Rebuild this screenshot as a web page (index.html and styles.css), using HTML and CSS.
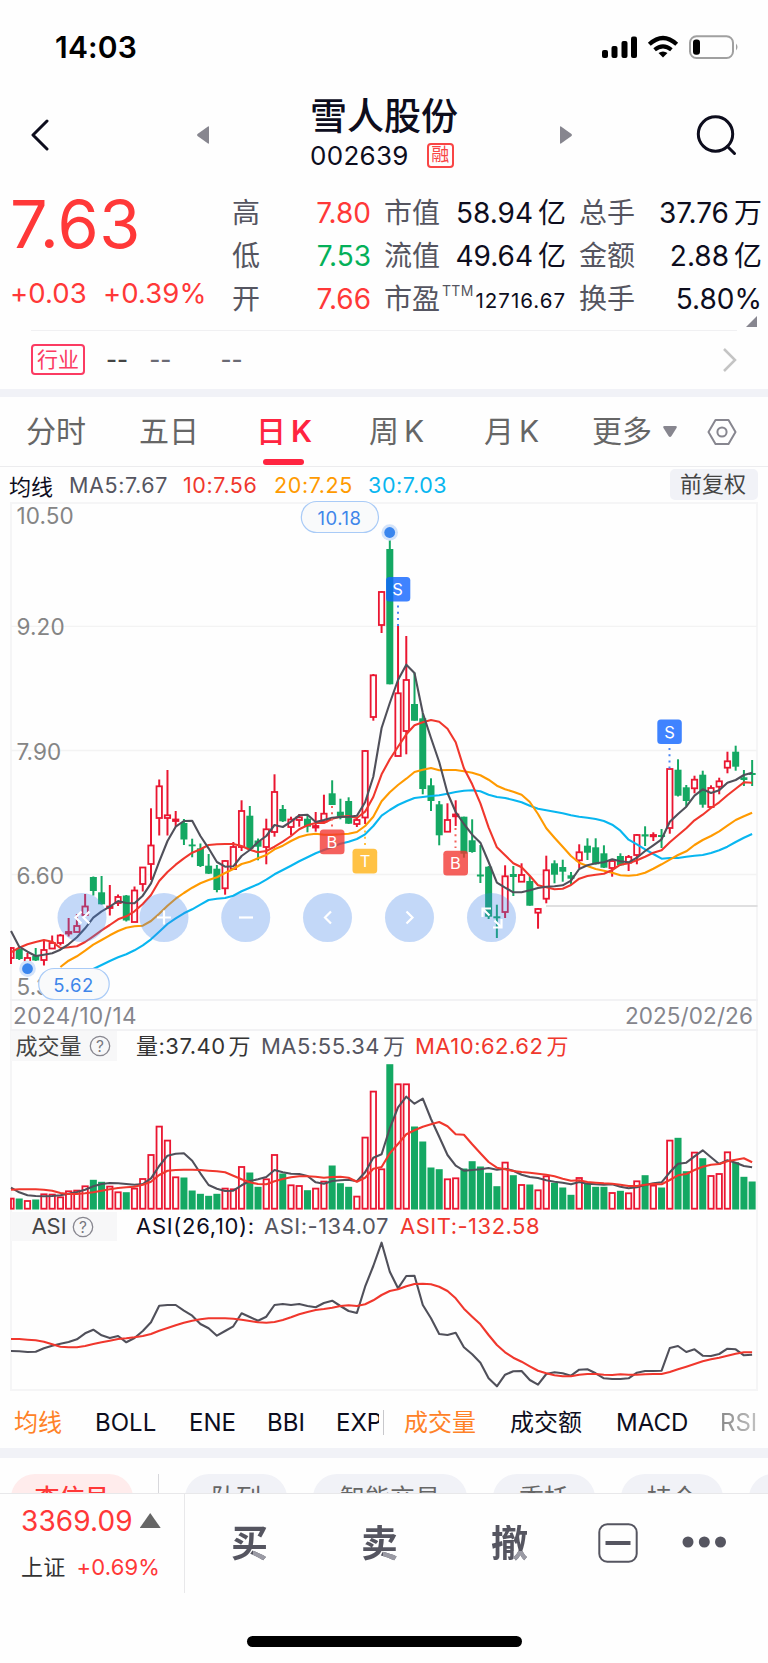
FILE: index.html
```html
<!DOCTYPE html>
<html lang="zh-CN">
<head>
    <meta charset="UTF-8">
    <meta name="viewport" content="width=device-width, initial-scale=1.0">
    <title>雪人股份 002639</title>
    <link rel="stylesheet" href="styles.css">
</head>
<body>
    <div class="status-bar">
        <span class="time">14:03</span>
        <svg class="status-icons" width="138" height="26" viewBox="0 0 138 26">
            <rect x="0" y="15" width="6" height="8" rx="2"/>
            <rect x="9.5" y="11" width="6" height="12" rx="2"/>
            <rect x="19.5" y="6" width="6" height="17" rx="2"/>
            <rect x="29" y="1.500" width="6" height="21.500" rx="2"/>
            <path d="M61 22.500 L56.500 18 Q61 14.800 65.500 18 Z"/>
            <path d="M52.600 14.800 Q61 8 69.400 14.800" fill="none" stroke="#000" stroke-width="4"/>
            <path d="M47.300 9.300 Q61 -3.300 74.700 9.300" fill="none" stroke="#000" stroke-width="4.200"/>
            <rect x="88" y="1.200" width="43" height="21.800" rx="6.500" fill="none" stroke="#a0a0a0" stroke-width="2"/>
            <rect x="91" y="4.500" width="7" height="15.200" rx="3"/>
            <path d="M134 8.500 q3 3.500 0 7 z" fill="#a0a0a0"/>
        </svg>
    </div>

    <header class="header">
        <svg class="back" width="20" height="32" viewBox="0 0 20 32"><path d="M17 2 L3 16 L17 30"/></svg>
        <svg class="prev" width="14" height="20" viewBox="0 0 14 20"><path d="M13 2 V18 Q13 19 12 18.500 L1.500 11 Q.5 10 1.500 9 L12 1.500 Q13 1 13 2Z"/></svg>
        <div class="stock">
            <div class="stock-name">雪人股份</div>
            <div class="stock-code">002639<span class="rong">融</span></div>
        </div>
        <svg class="next" width="14" height="20" viewBox="0 0 14 20"><path d="M1 2 V18 Q1 19 2 18.500 L12.500 11 Q13.500 10 12.500 9 L2 1.500 Q1 1 1 2Z"/></svg>
        <svg class="search" width="42" height="42" viewBox="0 0 42 42"><circle cx="19.500" cy="19" r="17.200"/><path d="M31.500 31.500 L38.500 38.500"/></svg>
    </header>

    <section class="quote">
        <div class="price-box">
            <div class="price">7.63</div>
            <div class="change"><span>+0.03</span><span>+0.39%</span></div>
        </div>
        <div class="stats">
            <span class="name">高</span><span class="val up">7.80</span>
            <span class="name">市值</span><span class="val">58.94<i>亿</i></span>
            <span class="name">总手</span><span class="val">37.76<i>万</i></span>
            <span class="name">低</span><span class="val down">7.53</span>
            <span class="name">流值</span><span class="val">49.64<i>亿</i></span>
            <span class="name">金额</span><span class="val">2.88<i>亿</i></span>
            <span class="name">开</span><span class="val up">7.66</span>
            <span class="name">市盈<sup>TTM</sup></span><span class="val small">12716.67</span>
            <span class="name">换手</span><span class="val">5.80%</span>
        </div>
        <div class="corner"></div>
    </section>

    <div class="industry">
        <span class="tag">行业</span>
        <span class="dash d1">--</span><span class="dash d2">--</span><span class="dash d3">--</span>
        <svg width="16" height="28" viewBox="0 0 16 28"><path d="M2 3 L13 14 L2 25"/></svg>
    </div>

    <nav class="tabs">
        <span>分时</span>
        <span>五日</span>
        <span class="active">日<b>K</b></span>
        <span>周<b>K</b></span>
        <span>月<b>K</b></span>
        <span>更多</span>
        <svg class="caret" width="16" height="13" viewBox="0 0 16 13"><path d="M2.500 1 H13.500 Q15.500 1 14.500 3 L9.500 11 Q8 13 6.500 11 L1.500 3 Q.5 1 2.500 1Z"/></svg>
        <svg class="hexagon" width="30" height="28" viewBox="0 0 30 28"><path d="M8.500 2 H21.500 L28.500 14 L21.500 26 H8.500 L1.500 14Z"/><circle cx="15" cy="14" r="4.600"/></svg>
    </nav>

    <div class="legend">
        <span class="lead">均线</span>
        <span class="ma5">MA5:7.67</span>
        <span class="ma10">10:7.56</span>
        <span class="ma20">20:7.25</span>
        <span class="ma30">30:7.03</span>
        <span class="adjust">前复权</span>
    </div>

    <main class="charts">
        <div class="panel kline-panel">
            <svg id="kline" width="768" height="498" viewBox="0 502 768 498">
                <g class="grid">
                    <path d="M11 626.300 H757 M11 750.500 H757 M11 874.500 H757"/>
                    <path class="support" d="M546 906 H757.500"/>
                </g>
                <g class="axis">
                    <text x="16.500" y="524">10.50</text>
                    <text x="16.500" y="634.500">9.20</text>
                    <text x="16.500" y="759.500">7.90</text>
                    <text x="16.500" y="883.500">6.60</text>
                    <text x="16.500" y="994.500">5.30</text>
                </g>
                <g id="candles"></g>
                <g id="averages"></g>
                <g class="pins">
                    <path class="s" d="M398 605.500 V627 M669.500 748 V769"/>
                    <path class="b" d="M332 806 V827 M455.500 828 V848"/>
                    <path class="t" d="M365 830.500 V847"/>
                    <rect class="s" x="386" y="577" width="24.300" height="24.500" rx="3.500"/>
                    <rect class="s" x="657.300" y="719.500" width="24.500" height="24.500" rx="3.500"/>
                    <rect class="b" x="319.800" y="829.500" width="24.700" height="24.700" rx="3.500"/>
                    <rect class="b" x="443.300" y="850.700" width="24.700" height="24.700" rx="3.500"/>
                    <rect class="t" x="352.500" y="848.700" width="24.700" height="24.700" rx="3.500"/>
                    <text x="397.500" y="595">S</text>
                    <text x="669.500" y="738">S</text>
                    <text x="332" y="848">B</text>
                    <text x="455.500" y="869">B</text>
                    <text x="365" y="867">T</text>
                </g>
                <g class="extremes">
                    <circle class="halo" cx="389.700" cy="532.500" r="8.300"/><circle cx="389.700" cy="532.500" r="5.400"/>
                    <circle class="halo" cx="27.500" cy="968.700" r="8.300"/><circle cx="27.500" cy="968.700" r="5.400"/>
                    <rect x="301.300" y="501.500" width="77.200" height="31" rx="15.500"/>
                    <rect x="38.700" y="968.500" width="70.500" height="31" rx="15.500"/>
                    <text x="339.500" y="524.500">10.18</text>
                    <text x="73.500" y="991.800">5.62</text>
                </g>
                <g class="controls">
                    <circle cx="82" cy="917.500" r="24.500"/>
                    <circle cx="164" cy="917.500" r="24.500"/>
                    <circle cx="245.700" cy="917.500" r="24.500"/>
                    <circle cx="327.500" cy="917.500" r="24.500"/>
                    <circle cx="409.500" cy="917.500" r="24.500"/>
                    <circle cx="491.500" cy="917.500" r="24.500"/>
                    <path d="M81.500 911.500 L75.500 917.500 L81.500 923.500 M89.500 911.500 L83.500 917.500 L89.500 923.500"/>
                    <path d="M157 917.500 H171 M164 910.500 V924.500"/>
                    <path d="M239 917.500 H253"/>
                    <path d="M331 911.500 L325 917.500 L331 923.500"/>
                    <path d="M406.500 911.500 L412.500 917.500 L406.500 923.500"/>
                    <path d="M482.500 917 V908.500 H491 M482.500 908.500 L489.500 915.500 M501.500 919 V927.500 H493 M501.500 927.500 L494.500 920.500"/>
                </g>
            </svg>
        </div>
        <div class="dates"><span class="from">2024/10/14</span><span>2025/02/26</span></div>

        <div class="panel">
            <div class="panel-head vol-head">
                <span class="picker">成交量<svg width="22" height="22" viewBox="0 0 22 22"><circle cx="11" cy="11" r="9.700"/><text x="11" y="16.500">?</text></svg></span>
                <span class="c-dark">量:37.40<i>万</i></span>
                <span class="ma5">MA5:55.34<i>万</i></span>
                <span class="ma10">MA10:62.62<i>万</i></span>
            </div>
            <svg id="volume" width="768" height="151" viewBox="0 1061 768 151"></svg>
        </div>

        <div class="panel">
            <div class="panel-head asi-head">
                <span class="picker">ASI<svg width="22" height="22" viewBox="0 0 22 22"><circle cx="11" cy="11" r="9.700"/><text x="11" y="16.500">?</text></svg></span>
                <span class="c-black">ASI(26,10):</span>
                <span class="ma5">ASI:-134.07</span>
                <span class="ma10">ASIT:-132.58</span>
            </div>
            <svg id="asi" width="768" height="150" viewBox="0 1241 768 150"></svg>
        </div>
    </main>

    <div class="indicators">
        <div class="ind-main">
            <span class="on">均线</span><span>BOLL</span><span>ENE</span><span>BBI</span><span>EXPMA</span>
        </div>
        <div class="ind-sub">
            <span class="on">成交量</span><span>成交额</span><span>MACD</span><span class="fade">RSI</span>
        </div>
    </div>

    <div class="pills">
        <span class="pill hot">查信号</span>
        <span class="line"></span>
        <span class="pill">队列</span>
        <span class="pill wide">智能交易</span>
        <span class="pill">委托</span>
        <span class="pill">持仓</span>
        <span class="pill"></span>
    </div>

    <footer class="bottom-bar">
        <div class="index-box">
            <div class="index-value">3369.09<span class="tri"></span></div>
            <div class="index-change"><span>上证</span><em>+0.69%</em></div>
        </div>
        <span class="trade buy">买</span>
        <span class="trade sell">卖</span>
        <span class="trade cancel">撤</span>
        <svg class="minus" width="41" height="41" viewBox="0 0 41 41"><rect x="1.300" y="1.300" width="37.400" height="37.400" rx="8"/><path d="M7.500 20 H32.500"/></svg>
        <svg class="more" width="46" height="14" viewBox="0 0 46 14"><circle cx="7" cy="7" r="5.500"/><circle cx="23.300" cy="7" r="5.500"/><circle cx="39.500" cy="7" r="5.500"/></svg>
    </footer>
    <div class="home-indicator"></div>

    <script src="chart.js"></script>
</body>
</html>
```
FILE: styles.css
```css
*, *::after {
    box-sizing: border-box;
}
body {
    margin: 0;
    width: 768px;
    height: 1663px;
    overflow: hidden;
    background: #fefefe;
    color: #0d0d1d;
    font-family: Inter, "Noto Sans CJK SC", sans-serif;
}
svg {
    display: block;
    flex: none;
}
i, em {
    font-style: normal;
}

/* status bar */
.status-bar {
    display: flex;
    justify-content: space-between;
    height: 90px;
    padding: 35px 28px 0 55px;
}
.time {
    font-size: 30px;
    line-height: 24px;
    font-weight: 600;
    color: #000;
    letter-spacing: 0.2px;
}

/* header */
.header {
    display: flex;
    height: 100px;
    padding-left: 30px;
}
.header svg {
    fill: none;
    stroke: #0d0d1d;
    stroke-width: 3;
    stroke-linecap: round;
    stroke-linejoin: round;
}
.header .prev, .header .next {
    fill: #87868f;
    stroke: none;
    margin-top: 35px;
}
.back {
    margin-top: 29px;
}
.prev {
    margin-left: 146px;
}
.stock {
    width: 160px;
    margin-left: 100px;
}
.stock-name {
    margin-top: 6px;
    font-size: 37px;
    line-height: 42px;
    font-weight: 500;
    white-space: nowrap;
}
.stock-code {
    display: flex;
    margin-top: 5px;
    font-size: 26px;
    line-height: 26px;
    letter-spacing: 0.3px;
}
.rong {
    width: 27px;
    height: 25px;
    margin: 0 0 0 18px;
    border: 2px solid #f94545;
    border-radius: 4px;
    color: #f94545;
    font-size: 18px;
    line-height: 20px;
    letter-spacing: 0;
    text-align: center;
}
.next {
    margin-left: 89px;
}
.search {
    margin: 25px 0 0 123px;
}

/* quote */
.quote {
    position: relative;
    display: flex;
    height: 141px;
    margin: 0 31px 0 0;
}
.quote::after {
    content: "";
    position: absolute;
    left: 31px;
    right: 0;
    bottom: 0;
    height: 1px;
    background: #f0f0f2;
}
.price-box {
    width: 232px;
    flex: none;
    padding-left: 10px;
    color: #ff3838;
}
.price {
    font-size: 66.5px;
    line-height: 68px;
    letter-spacing: 0.4px;
}
.change {
    display: flex;
    gap: 16px;
    margin-top: 19px;
    font-size: 27.5px;
    line-height: 32px;
    letter-spacing: 0.1px;
}
.stats {
    display: grid;
    flex: none;
    grid-template-columns: 40px 99px 70px 125px 81px 115px;
    grid-template-rows: 43px 43px 43px;
    padding-top: 1px;
    font-size: 28px;
    line-height: 44px;
    white-space: nowrap;
}
.stats .name {
    color: #555560;
}
.stats .name:nth-child(6n+3) {
    padding-left: 13px;
}
.stats .name:nth-child(6n+5) {
    padding-left: 13px;
}
.stats .val {
    text-align: right;
}
.stats .val i {
    margin-left: 5px;
}
.stats .up {
    color: #ff3838;
}
.stats .down {
    color: #04b059;
}
.stats .small {
    font-size: 20.5px;
    letter-spacing: 1px;
    padding-top: 2px;
}
.stats sup {
    display: inline-block;
    margin-left: 2px;
    font-size: 14px;
    line-height: 14px;
    letter-spacing: 0.3px;
    vertical-align: 13px;
}
.corner {
    position: absolute;
    left: 746px;
    top: 126px;
    width: 11px;
    height: 11px;
    background: #87868f;
    clip-path: polygon(100% 0, 100% 100%, 0 100%);
}

/* industry */
.industry {
    display: flex;
    align-items: center;
    height: 58px;
    padding: 0 30px 1px 31px;
    font-size: 24px;
}
.tag {
    width: 54px;
    height: 31px;
    border: 2px solid #fb3b62;
    border-radius: 4px;
    color: #fb3b62;
    font-size: 21px;
    line-height: 27px;
    text-align: center;
}
.dash {
    color: #6a6a74;
    font-weight: 500;
}
.d1 {
    color: #444;
    margin-left: 21px;
}
.d2 {
    margin-left: 21px;
}
.d3 {
    margin-left: 49px;
}
.industry svg {
    margin-left: auto;
    fill: none;
    stroke: #c4c4c4;
    stroke-width: 2.5;
}

/* period tabs */
.tabs {
    display: grid;
    grid-template-columns: 113px 117px 113px 115px 108px 70px 45px auto;
    align-items: center;
    height: 78px;
    padding: 0 0 0 26px;
    border-top: 8px solid #f1f2f7;
    border-bottom: 1px solid #ececee;
    font-size: 30px;
    line-height: 44px;
    color: #666;
}
.tabs span {
    position: relative;
    margin-top: -2px;
}
.tabs b {
    font-weight: 400;
    margin-left: 5px;
}
.tabs .active {
    color: #ff2440;
    font-weight: 500;
}
.tabs .active b {
    font-weight: 600;
}
.tabs .active::after {
    content: "";
    position: absolute;
    left: 7px;
    bottom: -12px;
    width: 41px;
    height: 6px;
    border-radius: 3px;
    background: #ff2440;
}
.caret {
    fill: #87868f;
}
.hexagon {
    fill: none;
    stroke: #87868f;
    stroke-width: 2;
    stroke-linejoin: round;
}

/* MA legend */
.legend {
    display: grid;
    grid-template-columns: 60px 114px 91px 94px 302px 88px;
    align-items: center;
    height: 35px;
    padding-left: 9px;
    font-size: 21.5px;
    letter-spacing: 0.6px;
}
.lead {
    font-size: 22px;
    letter-spacing: 0;
}
.ma5 {
    color: #555560;
}
.ma10 {
    color: #f0372d;
}
.ma20 {
    color: #ff9a00;
}
.ma30 {
    color: #08b6f0;
}
.adjust {
    height: 31px;
    padding-right: 2px;
    border-radius: 5px;
    background: #f1f2f7;
    color: #444;
    font-size: 22px;
    line-height: 30px;
    letter-spacing: 0;
    text-align: center;
}

/* charts */
.charts {
    position: relative;
    height: 889px;
}
.charts::after {
    content: "";
    position: absolute;
    left: 10px;
    top: 0;
    width: 748px;
    height: 889px;
    border: 2px solid #f5f5f6;
    z-index: -1;
}
.charts svg {
    overflow: visible;
}
.kline-panel {
    height: 497px;
}
.grid path {
    stroke: #f3f3f3;
    stroke-width: 1.3;
}
.grid .support {
    stroke: #dfdfe0;
    stroke-width: 2;
}
.axis text {
    font-size: 22.5px;
    letter-spacing: 0.1px;
    fill: #858585;
}
.bar-up {
    fill: #fefefe;
    stroke: #ea1631;
    stroke-width: 1.8;
}
.wick-up {
    stroke: #ea1631;
    stroke-width: 2;
}
.bar-down {
    fill: #14a863;
}
.wick-down {
    stroke: #14a863;
    stroke-width: 2;
}
.line {
    fill: none;
    stroke-width: 2.1;
    stroke-linejoin: round;
}
.line.ma5 {
    stroke: #50505a;
}
.line.ma10 {
    stroke: #f0372d;
}
.line.ma20 {
    stroke: #ff9a00;
}
.line.ma30 {
    stroke: #08b6f0;
}
.pins path {
    stroke-width: 2;
    stroke-dasharray: 2 4.2;
}
.pins path.s {
    stroke: #4a86f5;
}
.pins path.b {
    stroke: #f4605a;
}
.pins path.t {
    stroke: #ffc044;
}
.pins rect.s {
    fill: #0f64ff;
    fill-opacity: 0.8;
}
.pins rect.b {
    fill: #f23530;
    fill-opacity: 0.78;
}
.pins rect.t {
    fill: #ffb621;
    fill-opacity: 0.84;
}
.pins text {
    fill: #fff;
    font-size: 16.5px;
    text-anchor: middle;
}
.extremes circle {
    fill: #3a86ee;
}
.extremes .halo {
    fill: #d3e3fa;
}
.extremes rect {
    fill: #f9fafb;
    stroke: #a9cbf7;
    stroke-width: 1.2;
}
.extremes text {
    fill: #3f86ea;
    font-size: 18.5px;
    letter-spacing: 0.5px;
    text-anchor: middle;
}
.controls circle {
    fill: #3b82eb;
    fill-opacity: 0.3;
}
.controls path {
    fill: none;
    stroke: #fff;
    stroke-width: 2.2;
}
.dates {
    display: flex;
    justify-content: space-between;
    height: 32px;
    margin: 0 10px;
    padding: 0 5px 0 3px;
    border-top: 2px solid #f2f2f4;
    border-bottom: 2px solid #f2f2f4;
    font-size: 22.5px;
    line-height: 29px;
    letter-spacing: 0.1px;
    color: #85858c;
}
.dates .from {
    letter-spacing: 0.5px;
}
.panel-head {
    display: grid;
    grid-template-columns: 125px 125px 154px auto;
    height: 30px;
    padding-left: 11px;
    font-size: 22px;
    line-height: 30px;
    letter-spacing: 0.5px;
    white-space: nowrap;
}
.asi-head {
    grid-template-columns: 125px 128px 136px auto;
    height: 29px;
    line-height: 29px;
}
.asi-head .c-black {
    letter-spacing: 0.7px;
}
.panel-head i {
    margin-left: 3px;
    letter-spacing: 0;
}
.picker {
    display: flex;
    align-items: center;
    justify-content: center;
    gap: 5px;
    width: 106px;
    margin-right: 19px;
    padding-right: 3px;
    background: #f7f7f8;
    color: #444;
    letter-spacing: 0;
}
.vol-head .picker {
    gap: 7px;
    padding-right: 2px;
}
.picker circle {
    fill: none;
    stroke: #87868f;
    stroke-width: 1.3;
}
.picker text {
    fill: #77777f;
    font-size: 15.5px;
    text-anchor: middle;
}
.c-dark {
    color: #333;
}
.c-black {
    color: #0d0d1d;
}

/* indicator switcher */
.indicators {
    display: flex;
    height: 57px;
    padding: 19px 0 0 14px;
    font-size: 24px;
    line-height: 26px;
}
.ind-main {
    display: grid;
    flex: none;
    grid-template-columns: 81px 94px 78px 69px 43px;
    width: 365px;
    height: 32px;
    overflow: hidden;
}
.ind-sub {
    display: grid;
    grid-template-columns: 106px 106px 104px 38px;
    height: 25px;
    margin-left: 4px;
    padding-left: 20px;
    border-left: 1px solid #c8c8cc;
}
.indicators .on {
    color: #ff8228;
}
.ind-sub span:last-child {
    overflow: hidden;
}
.fade {
    color: #888;
    -webkit-mask-image: linear-gradient(90deg, #000, rgba(0, 0, 0, 0.5));
}

/* shortcut pills, cut off by the bottom bar */
.pills {
    display: flex;
    height: 45px;
    padding: 16px 0 0 11px;
    border-top: 10px solid #f1f2f7;
    overflow: hidden;
}
.pill {
    flex: none;
    width: 102px;
    height: 48px;
    margin-right: 26px;
    border-radius: 24px;
    background: #f1f2f7;
    color: #666;
    font-size: 25px;
    line-height: 48px;
    text-align: center;
}
.pill.hot {
    width: 122px;
    margin-right: 25px;
    background: #ffecec;
    color: #ff3838;
    font-weight: 500;
}
.pill.wide {
    width: 154px;
}
.pills .line {
    flex: none;
    width: 1px;
    height: 40px;
    margin-right: 26px;
    background: #d8d8dc;
}

/* bottom bar */
.bottom-bar {
    display: flex;
    height: 100px;
    border-top: 1px solid #e8e8ea;
}
.index-box {
    width: 185px;
    flex: none;
    padding: 10px 0 0 21px;
    border-right: 1px solid #e8e8ea;
}
.index-value {
    display: flex;
    font-size: 28px;
    line-height: 34px;
    letter-spacing: 0.1px;
    color: #ff3838;
}
.tri {
    width: 21px;
    height: 15px;
    margin: 9px 0 0 7px;
    background: #666;
    clip-path: polygon(50% 0, 100% 100%, 0 100%);
}
.index-change {
    display: flex;
    gap: 11px;
    margin-top: 12px;
    font-size: 22px;
    line-height: 34px;
    letter-spacing: 0.2px;
    color: #333;
}
.index-change em {
    color: #ff3838;
}
.trade {
    width: 37px;
    height: 38px;
    margin: 31px 0 0 46px;
    font-size: 37px;
    line-height: 38px;
    font-weight: 700;
    color: transparent;
    background: linear-gradient(#9a9aa4, #9a9aa4) no-repeat right bottom / 40% 32%, #555560;
    -webkit-background-clip: text;
    background-clip: text;
}
.sell, .cancel {
    margin-left: 93px;
}
.minus {
    margin: 29px 0 0 70px;
    fill: none;
    stroke: #555560;
    stroke-width: 2;
}
.minus path {
    stroke-width: 4;
}
.more {
    margin: 41px 0 0 42px;
    fill: #555560;
}
.home-indicator {
    width: 275px;
    height: 11px;
    margin: 43px 0 0 247px;
    border-radius: 6px;
    background: #000;
}
```
FILE: chart.js
```js
// one row per day: [up?, high, body top, body bottom, low]
const candles = [
    [1,947,948,958,964],[0,948,949,959,960],[1,953,958,966,968],[0,948,956,960.5,961],[1,940,950,960,965.5],
    [1,935.5,943,948.5,949],[1,934,935.5,943,945.5],[1,918,932,933.5,936.5],[1,914,926,932,932],[1,894,906.5,915,916],
    [0,876.5,877,891,895.5],[0,876,892.3,904.3,904.5],[1,885,906.5,908,915.5],[1,894.5,897,903,906],[0,895,895.5,920.5,921.5],
    [1,886.5,890.5,922,922],[1,867,867.5,884,891.5],[1,808.3,845.5,864,880],[1,779.5,786.3,818,835.5],[1,770,815.3,818,835.5],
    [1,811,819.5,821,826.5],[0,819,823,839.5,845],[0,838.7,844.5,846.3,857.3],[0,843.5,848.3,866,867],[0,854,865.7,873.7,874],
    [0,865,868.7,890,892.3],[1,860,861,888.3,894.7],[1,842,847,869,869],[1,800.3,811,847,851],[0,806,815.7,849,849],
    [0,838.5,840.5,846.7,860.3],[1,818.7,829.3,847,864.3],[1,774.3,792,832,836.7],[0,805,809,821.3,822],[1,816.7,819.5,827,835],
    [1,814,817.3,820,826.7],[0,815.7,818.7,826.7,832.3],[1,812,826,827.5,831.7],[1,794.7,813.7,821.5,823],[0,780.3,793.3,805,805],
    [0,798.7,811.7,816.7,819.3],[0,797.3,801,823.7,824],[1,817.7,820,824,827],[1,750,751,817.5,824],[1,674,675.3,717,720.7],
    [1,591,592,625,633],[0,533,549,684.3,684.3],[1,626,693.3,756,756],[1,636,680,731,754.3],[0,672.7,704,720.7,720.7],
    [0,713,718.3,789,794.3],[0,778.3,785.3,801,811],[0,801,804.3,835.3,845.3],[1,803.3,820,831.7,832],[1,800.3,814.5,816.3,826],
    [0,816.7,816.7,853.7,857.7],[0,819.3,840.3,852,852.7],[0,845,874.5,876.5,883],[0,866,866.7,916.7,919],[0,904.7,916.3,918.3,938],
    [1,865.3,876.3,912,918],[0,866,874,877,896],[1,863.3,875,881.7,882],[0,876,881,905.7,905.7],[1,908,909,912.7,928.7],
    [1,855.7,870.3,898.7,903.3],[0,860.3,863.3,874.7,883.3],[0,859.7,867,871.7,881.7],[0,872,875.3,878.7,884.7],[1,844.3,852.3,860.3,868.3],
    [0,838.3,845.7,852.7,860],[0,838.3,847.3,864.3,864.5],[0,845.3,853.3,867.7,868],[1,859,861,868,876.7],[0,853.3,856,865.3,866],
    [1,855,857,862.7,871],[1,834,835,855,864.3],[0,826.3,834.3,836.5,846],[1,832.3,835,836.3,841],[0,829,835,837,848],
    [1,768,769,828,833.7],[0,759.3,769.7,795.7,796.5],[0,785,787.3,801,806.7],[1,775.7,779.7,788.3,793.3],[0,770.7,774.7,804.7,807.7],
    [1,785.3,788,807,807],[1,777.7,781.3,786.7,794.3],[1,751.7,761.3,767.7,773.3],[0,745.7,751.7,766.7,770.7],[0,770,777.3,780,786],
    [0,760,773,775,786]
];
const ma5 = [931,946.7,951.7,956,954.7,953.3,949.7,944.3,937.3,928.3,917.7,911.3,906.7,901,903,903.3,895.7,883.3,861.7,841,
    826.7,821,820.7,836,848.3,862,866.7,866.3,856,850,842,836,825,827,821.7,815.3,814.7,822,820,817.7,
    817,816.7,815.7,802.3,776.7,728,703,680,664.7,673,713,738,762,793,812,824,834.7,842.7,862,882.7,
    887.7,892.3,892.3,890.3,888,886.7,886.3,885.3,880.7,869,865.3,863.3,862.3,859.3,861.3,862.3,857.7,851,845.3,839.3,
    821.7,814,806.7,795.7,789.3,793,790.3,782.7,780,775,772.7];
const ma10 = [952.3,947.7,944.3,942,940,941.7,948,947.3,946.3,942,936.3,930.3,925,919.3,916.3,911.3,904,895,881,872,
    864.7,858.3,852.7,849.3,845,844.3,844,844,846,849.7,852.3,851,846.7,841.7,836,829.3,825.3,823,823,818.7,
    816.7,816,818,811.7,797,774.3,759.3,746.7,734.3,725.3,722.3,720,721.7,728.7,742.3,768.3,784.3,803.3,827.3,847.3,
    855.3,863.3,867.3,875.7,885.3,887.3,889.3,888.7,885,878.7,876,874.7,873.7,870,864.7,863.3,860.3,856.7,852.7,850.3,
    842.3,835.3,828.3,820.3,814.7,808,802.3,795.3,788.7,782.3,782.7];
// starts on day 6
const ma20 = [967,960.7,956.3,950.7,944.7,940,935.3,931,927.7,926.3,925.7,921,913.7,905.7,
    898.7,893,887.7,883.3,880,877.3,873,869,864,861.7,858.3,855,849.3,845.7,841,837,834.7,833.7,834.7,834.7,
    834.3,833.7,832,826,816.7,801.3,792.3,785,778.7,772,769.7,768,770.3,770,770,771.3,772.7,775.3,779.7,785.7,
    789.3,791.7,794.7,802,814,828.3,837.7,846.7,856,862.7,866,869,870.7,872.7,875.3,875.7,875,872.7,868.7,864.3,
    859.7,855,851.3,845,840,836,831.3,825.7,820,816.3,812.7];
// starts on day 10
const ma30 = [969,965,961,957.3,954.3,950.3,945.3,939.3,931.7,924,
    918.3,913.3,909.3,904.7,900,898.7,898,895.7,891.3,887.7,884.3,879.7,874.3,870,865.7,861.3,857.3,853.3,850,847,
    843.7,841.7,839,834.3,826,815.7,810,805,801.3,798,797,796,795.3,793.7,792,790.7,790.3,791.3,794.7,797,
    798,800,802.3,805.7,808.7,810.3,811.7,813.3,815.3,816.7,817.7,819,821,824.7,830.7,839.7,844.3,849.3,854,858.7,
    858,858,856.7,855.7,855,853,850.3,846.7,842,837.7,834];

const volume = [11.7,11,9.3,10,16,15.7,13,19,19.7,24,29.7,27.7,23.7,18,17.3,21.7,31.3,55.3,83.7,69.7,
    33,32,19,15.7,13.7,15.7,21.7,21,43.3,37,22.7,31,55.3,36,25,24.3,19.3,21.7,28.7,44,
    26.3,22.7,13.7,72.7,118.7,41,145.3,126,126,83,68,42,40.3,31,32,41,48.3,43,36.7,23.3,
    47.7,34.3,25.3,25,20,34,26.7,22,14.7,32.3,26,22.7,22.7,17.3,18.7,17,29,34.3,24.7,22,
    69.7,71.7,38.3,57.7,51.3,34.3,36.3,58,47.3,32.7,28];
const volMa5 = [503,517,526,528,529,528,526,521,516,509,499,492,489,490,492,494,492,475,438,407,
    401,400,422,460,495,506,513,512,496,483,478,471,450,457,461,462,468,487,491,483,
    481,479,484,457,413,403,325,262,230,251,236,297,350,405,437,452,450,448,444,449,
    446,452,464,471,474,481,485,488,493,486,491,493,494,493,500,505,502,495,490,487,
    457,431,428,409,391,412,432,421,428,438,442];
const volMa10 = [509,508,508,508,509,512,519,522,522,520,517,512,508,504,502,500,494,485,465,452,
    450,449,449,450,452,454,457,467,478,487,492,493,484,477,472,469,469,470,473,471,
    470,473,485,473,446,441,400,372,343,331,320,313,306,319,343,344,373,400,426,443,
    448,453,456,458,461,464,469,476,482,481,486,488,490,491,494,498,498,494,492,493,
    480,466,462,450,440,434,432,424,419,415,427];

const asi = [423,424,426,425,415,407,401,396,388,370,359,376,384,378,397,384,363,337,287,285,
    285,302,317,342,355,377,363,349,310,321,332,320,285,282,285,282,288,292,279,272,
    288,303,309,230,168,98,185,235,198,197,285,325,372,375,368,412,433,458,505,529,
    494,484,483,510,524,492,487,490,497,479,478,490,505,507,507,505,488,483,483,482,
    414,408,426,418,437,438,432,416,418,436,434];
const asit = [387,387,389,391,395,403,410,412,412,408,402,397,392,387,385,382,378,372,362,354,
    346,338,332,328,325,325,325,326,329,333,337,338,336,330,322,313,306,300,297,293,
    288,286,288,283,271,255,243,238,229,222,221,223,230,243,265,296,320,343,375,405,
    427,443,455,469,482,490,496,499,499,494,492,492,494,495,493,494,494,493,492,492,
    486,478,470,462,454,448,443,437,431,427,427];

const NS = 'http://www.w3.org/2000/svg';
const BASE = 1209.5;
const x = i => 11 + i * 8.235;

function add(parent, tag, cls, attrs) {
    const el = document.createElementNS(NS, tag);
    el.setAttribute('class', cls);
    for (const key in attrs) el.setAttribute(key, attrs[key]);
    parent.appendChild(el);
}

function line(parent, cls, values, start = 0, toY = v => v) {
    const points = values.map((v, i) => x(i + start).toFixed(1) + ',' + toY(v).toFixed(1)).join(' ');
    add(parent, 'polyline', 'line ' + cls, { points });
}

// the first day is half hidden behind the left frame
function bar(parent, i, up, top, bottom) {
    const half = up ? 2.7 : 3.5;
    const left = i === 0 ? x(0) : x(i) - half;
    add(parent, 'rect', up ? 'bar-up' : 'bar-down', {
        x: left, y: top, width: x(i) + half - left, height: Math.max(bottom - top, 1)
    });
}

const candleLayer = document.getElementById('candles');
candles.forEach(([up, high, top, bottom, low], i) => {
    const cls = up ? 'wick-up' : 'wick-down';
    add(candleLayer, 'line', cls, { x1: x(i), x2: x(i), y1: high, y2: low });
    bar(candleLayer, i, up, top, bottom);
});

const averages = document.getElementById('averages');
line(averages, 'ma30', ma30, 10);
line(averages, 'ma20', ma20, 6);
line(averages, 'ma10', ma10);
line(averages, 'ma5', ma5);

const volumeSvg = document.getElementById('volume');
volume.forEach((v, i) => {
    const up = candles[i][0];
    bar(volumeSvg, i, up, BASE - v + (up ? 0.8 : 0), up ? BASE - 0.8 : BASE);
});
line(volumeSvg, 'ma5', volMa5, 0, v => 1020 + v / 3);
line(volumeSvg, 'ma10', volMa10, 0, v => 1020 + v / 3);

const asiSvg = document.getElementById('asi');
line(asiSvg, 'ma5', asi, 0, v => 1210 + v / 3);
line(asiSvg, 'ma10', asit, 0, v => 1210 + v / 3);
```
